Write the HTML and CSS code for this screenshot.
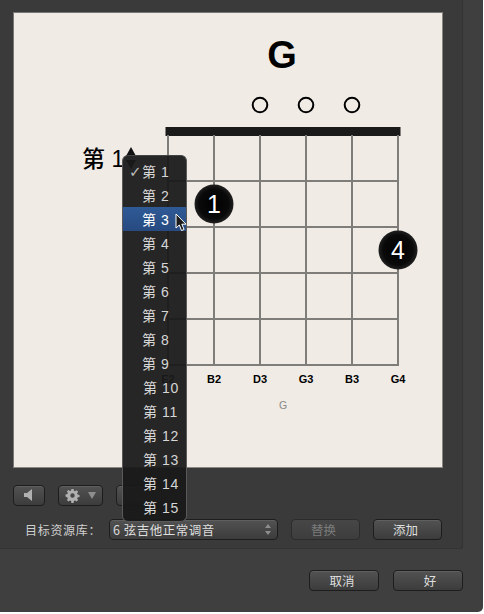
FILE: index.html
```html
<!DOCTYPE html>
<html lang="zh">
<head>
<meta charset="utf-8">
<title>和弦</title>
<link rel="stylesheet" href="styles.css">
</head>
<body>
<div class="window">
  <div class="panel">
    <div class="canvas">
      <svg class="chord" width="429" height="455" viewBox="14 13 429 455">
        <defs>
          <radialGradient id="dot" cx="50%" cy="50%" r="55%">
            <stop offset="0" stop-color="#000"/>
            <stop offset="0.7" stop-color="#0a0a0a"/>
            <stop offset="1" stop-color="#2a2a2a"/>
          </radialGradient>
        </defs>
        <text class="chord-name" x="282" y="68">G</text>
        <circle class="open" cx="260" cy="105" r="7.3"/>
        <circle class="open" cx="306" cy="105" r="7.3"/>
        <circle class="open" cx="352" cy="105" r="7.3"/>
        <rect class="nut" x="165.5" y="127" width="235" height="9"/>
        <path class="grid" d="M168 135V365M214 135V365M260 135V365M306 135V365M352 135V365M398 135V365M168 181H398M168 227H398M168 273H398M168 319H398M167 365H399"/>
        <text class="fret-label" x="82" y="167">第 1</text>
        <path class="arrow" d="M131 147l5 9h-10z"/>
        <path class="arrow" d="M131 169l5-9h-10z"/>
        <circle class="finger" cx="214" cy="204" r="19.5"/>
        <text class="finger-num" x="214" y="213">1</text>
        <circle class="finger" cx="398" cy="250" r="19.5"/>
        <text class="finger-num" x="398" y="259">4</text>
        <text class="string" x="168" y="383">E2</text>
        <text class="string" x="214" y="383">B2</text>
        <text class="string" x="260" y="383">D3</text>
        <text class="string" x="306" y="383">G3</text>
        <text class="string" x="352" y="383">B3</text>
        <text class="string" x="398" y="383">G4</text>
        <text class="caption" x="283" y="409">G</text>
      </svg>
    </div>
    <div class="tools">
      <button class="btn tool speaker" type="button" aria-label="播放">
        <svg width="14" height="14" viewBox="0 0 14 14"><path class="glyph" d="M2 5h3l5-4v12l-5-4H2z"/></svg>
      </button>
      <button class="btn tool gear" type="button" aria-label="操作">
        <svg width="15" height="15" viewBox="0 0 15 15"><path class="glyph" fill-rule="evenodd" d="M6.4 1h2.2l.3 1.8 1.2.5 1.5-1 1.5 1.5-1 1.5.5 1.2 1.9.4v2.2l-1.9.3-.5 1.2 1 1.5-1.5 1.5-1.5-1-1.2.5-.3 1.9H6.4l-.3-1.9-1.2-.5-1.5 1-1.5-1.5 1-1.5-.5-1.2L.5 8.600V6.400l1.900-.3.5-1.200-1-1.500L3.400 1.900l1.500 1 1.200-.5zM7.500 5.300a2.200 2.200 0 1 0 0 4.400 2.200 2.200 0 0 0 0-4.400z"/></svg>
        <svg width="8" height="7" viewBox="0 0 8 7"><path class="glyph dim" d="M0 0h8L4 7z"/></svg>
      </button>
      <button class="btn tool third" type="button" aria-label="更多"></button>
    </div>
    <div class="target">
      <span class="target-label">目标资源库：</span>
      <div class="btn select">
        <span>6 弦吉他正常调音</span>
        <svg width="6" height="11" viewBox="0 0 6 11"><path class="glyph dim" d="M3 0l3 4H0zM3 11L0 7h6z"/></svg>
      </div>
      <div class="actions">
        <button class="btn action nudge-left disabled" type="button">替换</button>
        <button class="btn action nudge-left" type="button">添加</button>
      </div>
    </div>
  </div>
  <div class="footer">
    <button class="btn action wide-btn nudge-left" type="button">取消</button>
    <button class="btn action wide-btn nudge-right" type="button">好</button>
  </div>
  <ul class="menu">
    <li class="item checked">第 1</li>
    <li class="item">第 2</li>
    <li class="item active">第 3</li>
    <li class="item">第 4</li>
    <li class="item">第 5</li>
    <li class="item">第 6</li>
    <li class="item">第 7</li>
    <li class="item">第 8</li>
    <li class="item">第 9</li>
    <li class="item wide">第 10</li>
    <li class="item wide">第 11</li>
    <li class="item wide">第 12</li>
    <li class="item wide">第 13</li>
    <li class="item wide">第 14</li>
    <li class="item wide">第 15</li>
  </ul>
  <svg class="cursor" width="13" height="20" viewBox="0 0 13 20"><path d="M1 1v14l3.300-3 2.200 5.500 2.600-1-2.300-5.300H11z"/></svg>
</div>
</body>
</html>
```
FILE: styles.css
```css
* { box-sizing: border-box; }
html, body { margin: 0; padding: 0; background: #fff; }
body { width: 484px; height: 614px; overflow: hidden; font-family: "Liberation Sans", "Noto Sans CJK SC", sans-serif; }
.window { position: relative; width: 483px; height: 612px; background: #3f3f3f; border-bottom-right-radius: 5px; overflow: hidden; }
.panel { width: 463px; height: 549px; background: #3a3a3a; border-right: 1px solid #333; border-bottom: 1px solid #333; border-bottom-right-radius: 3px; padding: 13px 0 0 13px; display: flex; flex-direction: column; }
.canvas { width: 430px; height: 456px; background: #f0ebe5; border: 1px solid #8a8884; border-top-color: #777; border-left-color: #777; margin: -1px 0 0 0; }
.chord { display: block; margin: 0; }
.chord-name { font: bold 38px "Liberation Sans", sans-serif; text-anchor: middle; fill: #000; }
.open { fill: none; stroke: #000; stroke-width: 2; }
.nut { fill: #1a1a1a; }
.grid { fill: none; stroke: #7f7d79; stroke-width: 2; }
.fret-label { font: 500 23px "Liberation Sans", "Noto Sans CJK SC", sans-serif; fill: #000; }
.arrow { fill: #111; }
.finger { fill: url(#dot); }
.finger-num { font: 25px "Liberation Sans", sans-serif; text-anchor: middle; fill: #fff; }
.string { font: bold 11px "Liberation Sans", sans-serif; text-anchor: middle; fill: #000; }
.caption { font: 10.500px "Liberation Sans", sans-serif; text-anchor: middle; fill: #888; }
.btn { display: flex; align-items: center; justify-content: center; height: 21px; padding: 0 0 1px; border: 1px solid #1d1d1d; border-radius: 4px; background: linear-gradient(#525252, #3c3c3c); box-shadow: inset 0 1px 0 #5f5f5f; color: #dedede; font: 12.500px "Noto Sans CJK SC", sans-serif; }
.nudge-left { padding-right: 4px; }
.nudge-right { padding-left: 4px; }
.tools { display: flex; gap: 13px; margin-top: 17px; height: 21px; }
.tool { flex: none; }
.speaker { width: 32px; }
.gear { width: 45px; gap: 8px; }
.third { width: 46px; }
.glyph { fill: #b0b0b0; }
.glyph.dim { fill: #8e8e8e; }
.target { display: flex; align-items: center; margin-top: 13px; height: 21px; }
.target-label { width: 84px; padding-left: 12px; font: 12px "Noto Sans CJK SC", sans-serif; color: #d0d0d0; white-space: nowrap; letter-spacing: 0.7px; }
.select { width: 169px; margin-left: 12px; justify-content: space-between; padding: 0 6px 1px 3px; font-size: 12.500px; letter-spacing: 0.5px; white-space: nowrap; }
.actions { display: flex; gap: 13px; margin-left: 13px; }
.action { width: 69px; flex: none; }
.wide-btn { width: 70px; }
.disabled { color: #7c7c7c; background: linear-gradient(#474747, #3d3d3d); box-shadow: none; border-color: #2c2c2c; }
.footer { display: flex; justify-content: flex-end; gap: 14px; margin-top: 21px; width: 463px; }
.menu { position: absolute; left: 122px; top: 155px; width: 65px; height: 367px; margin: 0; padding: 3px 0; list-style: none; background: rgba(26, 26, 26, 0.94); border: 1px solid #5a5a5a; border-top-color: #444; border-radius: 6px; }
.item { position: relative; height: 24px; padding-left: 19px; font: 14px/26px "Liberation Sans", "Noto Sans CJK SC", sans-serif; color: #d6d6d6; letter-spacing: 0.6px; white-space: nowrap; }
.item.wide { padding-left: 20px; }
.item.active { background: linear-gradient(#2f5a96, #274a80); color: #fff; }
.item.checked::before { content: "✓"; position: absolute; left: 6px; top: 0; font-family: "DejaVu Sans", sans-serif; font-size: 15px; font-weight: bold; color: #bbb; }
.cursor { position: absolute; left: 175px; top: 213px; }
.cursor path { fill: #1b1b1b; stroke: #fff; stroke-width: 1; }
```
